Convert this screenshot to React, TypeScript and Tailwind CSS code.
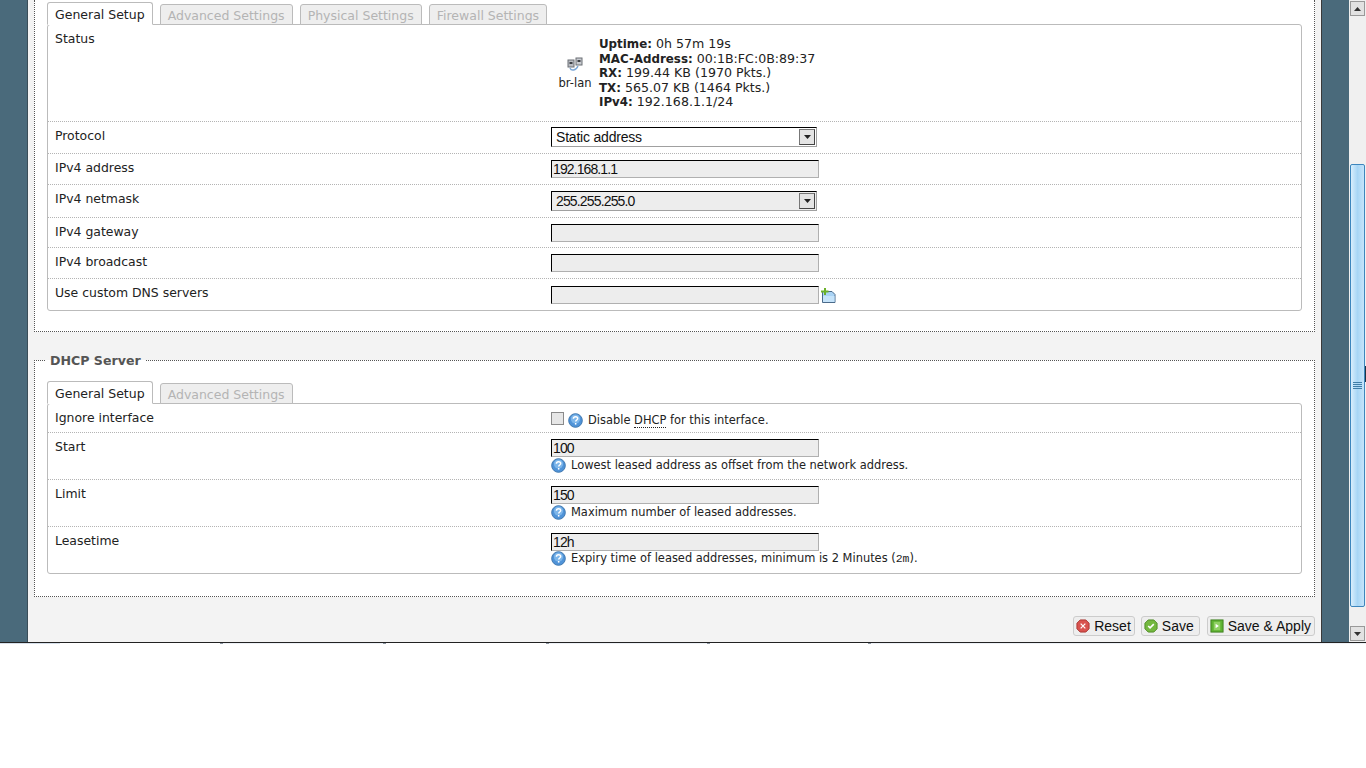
const ui = '"DejaVu Sans", Verdana, sans-serif'
const sans = '"Liberation Sans", Arial, sans-serif'

function HelpIcon() {
  return (
    <svg width="15" height="15" viewBox="0 0 15 15" className="shrink-0">
      <circle cx="7.5" cy="7.5" r="6.8" fill="#4f93d8" stroke="#3f78b0" />
      <circle cx="7.5" cy="6" r="4.6" fill="#7db6ea" />
      <path d="M5.4 5.8c0-1.4 1-2.1 2.2-2.1s2.1.8 2.1 1.8c0 1.5-2 1.5-2 3" fill="none" stroke="#fff" strokeWidth="1.5" />
      <rect x="6.9" y="10" width="1.5" height="1.6" fill="#fff" />
    </svg>
  )
}

function AddIcon() {
  return (
    <svg width="15" height="15" viewBox="0 0 15 15" className="shrink-0">
      <path d="M1.500 3.500h9.500l3 3v8h-12.500z" fill="#a9d3f5" stroke="#4a6a8a" />
      <path d="M2 8h11.500v6h-11.500z" fill="#c5e3fa" />
      <path d="M3 0h2v2.500h2.500v2h-2.500v2.500h-2v-2.500h-3v-2h3z" fill="#6cb12a" />
    </svg>
  )
}

function NetIcon() {
  return (
    <svg width="16" height="14" viewBox="0 0 16 14">
      <rect x="1" y="3" width="6" height="7" fill="#b9bcc2" stroke="#6b6f75" />
      <rect x="9" y="1" width="6" height="7" fill="#c8cbd0" stroke="#6b6f75" />
      <rect x="2.500" y="5" width="3" height="2" fill="#3c3f44" />
      <rect x="10.500" y="3" width="3" height="2" fill="#3c3f44" />
      <path d="M3 11c1 3 6 3 8-2" fill="none" stroke="#7aa6d6" strokeWidth="1.4" />
    </svg>
  )
}

function TextInput({ value = '' }: { value?: string }) {
  return (
    <input
      readOnly
      value={value}
      className="block w-[268px] h-[18px] bg-[#ededed] border-t border-l border-t-black border-l-black border-b border-r border-b-[#b0b0b0] border-r-[#b0b0b0] px-px text-[14px] tracking-[-0.9px] text-[#111] outline-none"
      style={{ fontFamily: sans }}
    />
  )
}

function SelectBox({ value, grey }: { value: string; grey?: boolean }) {
  return (
    <div
      className={`flex items-center justify-between w-[266px] h-5 border-t border-l border-t-black border-l-black border-b border-r border-b-[#a0a0a0] border-r-[#a0a0a0] text-[14px] text-[#111] ${grey ? 'bg-[#ededed] tracking-[-0.85px]' : 'bg-white tracking-[-0.2px]'}`}
      style={{ fontFamily: sans }}
    >
      <span className="pl-1">{value}</span>
      <span className="flex items-center justify-center w-4 h-4 mr-px bg-[#e4e4e4] border border-[#777] border-r-[#444] border-b-[#444]">
        <svg width="7" height="4" viewBox="0 0 7 4">
          <path d="M0 0h7l-3.500 4z" fill="#222" />
        </svg>
      </span>
    </div>
  )
}

function Row({
  label,
  height,
  last,
  children,
}: {
  label: string
  height: string
  last?: boolean
  children?: React.ReactNode
}) {
  return (
    <div className={`flex ${height} ${last ? '' : 'border-b border-dotted border-b-[#b4b4b4]'}`}>
      <div className="w-[503px] pl-[7px] pt-[5px] text-[12.450px] leading-[18px] text-[#222] shrink-0">{label}</div>
      <div className="flex-1">{children}</div>
    </div>
  )
}

function Tabs({ items }: { items: string[] }) {
  return (
    <div className="flex h-[22px] items-end -mb-px relative">
      {items.map((t, i) =>
        i === 0 ? (
          <div
            key={t}
            className="h-[23px] px-[7px] pt-[3px] bg-white border border-[#bbb] border-b-white rounded-t-[3px] text-[12.500px] leading-[18px] text-[#222] mr-[7px]"
          >
            {t}
          </div>
        ) : (
          <div
            key={t}
            className="h-[21px] px-[7px] pt-[2px] bg-[#eee] border border-[#bbb] border-b-[#bbb] rounded-t-[3px] text-[12.500px] leading-[18px] text-[#b4b4b4] mr-[7px]"
          >
            {t}
          </div>
        )
      )}
    </div>
  )
}

function Scrollbar() {
  return (
    <div className="relative w-[17px] h-full bg-[#f0f0f0] flex flex-col pl-px">
      <div className="flex items-center justify-center w-[15px] h-[15px] mt-px bg-[#e2e2e2] border border-[#999]">
        <svg width="7" height="4" viewBox="0 0 7 4">
          <path d="M0 4h7l-3.500-4z" fill="#333" />
        </svg>
      </div>
      <div className="mt-[148px] w-[15px] h-[443px] bg-gradient-to-r from-[#d8eefc] via-[#a8d6f5] to-[#c5e4fa] border border-[#3d86bd] rounded-[2px] flex items-center justify-center">
        <div className="flex flex-col gap-px w-[9px]">
          <div className="h-px bg-[#3f7ea8]" />
          <div className="h-px bg-[#3f7ea8]" />
          <div className="h-px bg-[#3f7ea8]" />
          <div className="h-px bg-[#3f7ea8]" />
        </div>
      </div>
      <div className="flex-1" />
      <div className="flex items-center justify-center w-[15px] h-[15px] mb-px bg-[#e2e2e2] border border-[#999]">
        <svg width="7" height="4" viewBox="0 0 7 4">
          <path d="M0 0h7l-3.500 4z" fill="#333" />
        </svg>
      </div>
      {/* sliver of the mouse pointer */}
      <div className="absolute right-0 top-[366px] w-px h-[16px] bg-[#1e3344]" />
    </div>
  )
}

function ActionButton({ label, icon, wide }: { label: string; icon: React.ReactNode; wide?: boolean }) {
  return (
    <div
      className={`flex items-center gap-1 h-[20px] bg-[#eeeeee] border border-[#cccccc] rounded-[3px] text-[14px] text-[#111] ${wide ? 'pl-[2px] pr-[5px]' : 'pl-[2px] pr-[3px]'}`}
      style={{ fontFamily: sans }}
    >
      {icon}
      <span>{label}</span>
    </div>
  )
}

function Hint({ text, tight }: { text: React.ReactNode; tight?: boolean }) {
  return (
    <div className={`flex items-center text-[11.450px] leading-[15px] text-[#222] ${tight ? '' : 'mt-px'}`}>
      <HelpIcon />
      <span className="ml-[5px]">{text}</span>
    </div>
  )
}

function StatusLine({ name, value }: { name: string; value: string }) {
  return (
    <div>
      <b className="text-[11.850px]">{name}</b> {value}
    </div>
  )
}

// faint taskbar edge showing under the window
const edgeSegments = [
  'w-[60px] bg-[#d5dfea]',
  'w-[160px] bg-white',
  'w-[3px] bg-[#8a94a0]',
  'w-[160px] bg-[#edf1f6]',
  'w-[3px] bg-[#8a94a0]',
  'w-[160px] bg-white',
  'w-[3px] bg-[#8a94a0]',
  'w-[158px] bg-[#edf1f6]',
  'w-[3px] bg-[#8a94a0]',
  'w-[158px] bg-white',
  'w-[3px] bg-[#8a94a0]',
  'w-[160px] bg-[#edf1f6]',
  'flex-1 bg-[#edf1f6]',
]

export default function App() {
  return (
    <div className="min-h-[768px] bg-white" style={{ fontFamily: ui }}>
      <div className="flex h-[643px] overflow-hidden bg-[#4a6a7b] border-b border-b-[#222]">
        <div className="w-[27px] shrink-0" />
        <div className="w-[1295px] shrink-0 border-l border-r border-l-[#3a4d58] border-r-[#3a3a3a] bg-[#f3f3f3] px-[6px]">
          {/* Interface fieldset, cut off by the scroll position */}
          <div className="h-[332px] bg-white border-b border-l border-r border-dotted border-[#555] px-3 pt-[3px]">
            <Tabs items={['General Setup', 'Advanced Settings', 'Physical Settings', 'Firewall Settings']} />
            <div className="h-[287px] bg-white border border-[#bbb] rounded-[3px]">
              <Row label="Status" height="h-[97px]">
                <div className="flex pt-[12px]">
                  <div className="w-[48px] flex flex-col items-center pt-[20px]">
                    <NetIcon />
                    <span className="text-[11.500px] leading-[12px] mt-[6px] text-[#222]">br-lan</span>
                  </div>
                  <div className="text-[12.600px] leading-[14.500px] text-[#222]">
                    <StatusLine name="Uptime:" value="0h 57m 19s" />
                    <StatusLine name="MAC-Address:" value="00:1B:FC:0B:89:37" />
                    <StatusLine name="RX:" value="199.44 KB (1970 Pkts.)" />
                    <StatusLine name="TX:" value="565.07 KB (1464 Pkts.)" />
                    <StatusLine name="IPv4:" value="192.168.1.1/24" />
                  </div>
                </div>
              </Row>
              <Row label="Protocol" height="h-[32px]">
                <div className="pt-[5px]"><SelectBox value="Static address" /></div>
              </Row>
              <Row label="IPv4 address" height="h-[31px]">
                <div className="pt-[6px]"><TextInput value="192.168.1.1" /></div>
              </Row>
              <Row label="IPv4 netmask" height="h-[33px]">
                <div className="pt-[6px]"><SelectBox value="255.255.255.0" grey /></div>
              </Row>
              <Row label="IPv4 gateway" height="h-[30px]">
                <div className="pt-[6px]"><TextInput /></div>
              </Row>
              <Row label="IPv4 broadcast" height="h-[31px]">
                <div className="pt-[6px]"><TextInput /></div>
              </Row>
              <Row label="Use custom DNS servers" height="h-[31px]" last>
                <div className="flex items-end pt-[7px]">
                  <TextInput />
                  <span className="ml-[2px] mb-px"><AddIcon /></span>
                </div>
              </Row>
            </div>
          </div>

          {/* DHCP fieldset */}
          <fieldset className="mt-[19px] h-[246px] bg-white border border-dotted border-[#555] px-3">
            <legend className="ml-[-2px] px-[5px] pt-px text-[12.600px] leading-[17px] font-bold text-[#555]">
              DHCP Server
            </legend>
            <div className="pt-[13px]">
              <Tabs items={['General Setup', 'Advanced Settings']} />
              <div className="h-[171px] bg-white border border-[#bbb] rounded-[3px]">
                <Row label="Ignore interface" height="h-[29px]">
                  <div className="flex items-center pt-[8px] text-[11.450px] leading-[16px] text-[#222]">
                    <span className="block w-[13px] h-[13px] bg-[#e6e6e6] border border-[#8a8a8a] mr-[4px] -mt-[4px]" />
                    <HelpIcon />
                    <span className="ml-[5px]">
                      Disable <span className="border-b border-dotted border-b-[#222]">DHCP</span> for this interface.
                    </span>
                  </div>
                </Row>
                <Row label="Start" height="h-[47px]">
                  <div className="pt-[6px]"><TextInput value="100" /></div>
                  <Hint text="Lowest leased address as offset from the network address." />
                </Row>
                <Row label="Limit" height="h-[47px]">
                  <div className="pt-[6px]"><TextInput value="150" /></div>
                  <Hint text="Maximum number of leased addresses." />
                </Row>
                <Row label="Leasetime" height="h-[46px]" last>
                  <div className="pt-[6px]"><TextInput value="12h" /></div>
                  <Hint
                    tight
                    text={
                      <>
                        Expiry time of leased addresses, minimum is 2 Minutes (
                        <code style={{ fontFamily: '"Liberation Mono", monospace' }}>2m</code>).
                      </>
                    }
                  />
                </Row>
              </div>
            </div>
          </fieldset>

          {/* Actions */}
          <div className="flex justify-end mt-[19px]">
            <ActionButton
              label="Reset"
              icon={
                <svg width="14" height="14" viewBox="0 0 15 15">
                  <path d="M4.500 1h6l3.500 3.500v6l-3.500 3.500h-6l-3.500-3.500v-6z" fill="#d9534f" stroke="#a8332f" />
                  <path d="M5 5l5 5M10 5l-5 5" stroke="#fff" strokeWidth="1.300" />
                </svg>
              }
            />
            <div className="w-[6px]" />
            <ActionButton
              wide
              label="Save"
              icon={
                <svg width="14" height="14" viewBox="0 0 15 15">
                  <path d="M4.500 1h6l3.500 3.500v6l-3.500 3.500h-6l-3.500-3.500v-6z" fill="#74b83f" stroke="#4d8a24" />
                  <path d="M4.500 7.500l2 2 4-4" fill="none" stroke="#fff" strokeWidth="1.700" />
                </svg>
              }
            />
            <div className="w-[7px]" />
            <ActionButton
              label="Save &amp; Apply"
              icon={
                <svg width="14" height="14" viewBox="0 0 15 15">
                  <rect x="1" y="1" width="13" height="13" fill="#5fb332" stroke="#3d7f1d" />
                  <rect x="4" y="3" width="7" height="9" fill="#8fd163" />
                  <path d="M6 5l3.500 2.500-3.500 2.500z" fill="#fff" />
                </svg>
              }
            />
          </div>
        </div>
        <div className="w-[27px] shrink-0" />
        <Scrollbar />
      </div>
      <div className="flex h-px">
        {edgeSegments.map((c, i) => (
          <div key={i} className={c} />
        ))}
      </div>
    </div>
  )
}
